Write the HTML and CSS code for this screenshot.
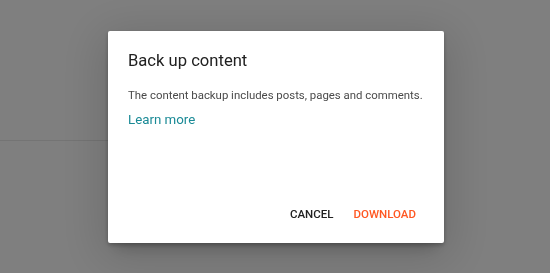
FILE: index.html
```html
<!DOCTYPE html>
<html lang="en">
<head>
    <meta charset="UTF-8">
    <meta name="viewport" content="width=device-width, initial-scale=1.0">
    <title>Back up content</title>
    <link rel="stylesheet" href="styles.css">
</head>
<body>
    <div class="page">
        <div class="page-divider"></div>
    </div>

    <div class="overlay">
        <div class="dialog">
            <h2 class="dialog-title">Back up content</h2>
            <div class="dialog-content">
                <p class="dialog-text">The content backup includes posts, pages and comments.</p>
                <a class="learn-more" href="#">Learn more</a>
            </div>
            <div class="dialog-actions">
                <button class="btn btn-cancel">Cancel</button>
                <button class="btn btn-download">Download</button>
            </div>
        </div>
    </div>
</body>
</html>
```

FILE: styles.css
```css
* {
    box-sizing: border-box;
    margin: 0;
    padding: 0;
    font-family: Roboto, 'Noto Sans', Arial, sans-serif;
}

body {
    min-height: 100vh;
    background-color: #fff;
}

.page {
    padding-top: 140px;
}

.page-divider {
    width: 45%;
    border-top: 1px solid #e8e8e8;
}

.overlay {
    position: fixed;
    top: 0;
    left: 0;
    right: 0;
    bottom: 0;
    display: flex;
    justify-content: center;
    align-items: center;
    padding-left: 2px;
    background-color: rgba(0, 0, 0, 0.5);
}

.dialog {
    display: flex;
    flex-direction: column;
    width: 336px;
    height: 212px;
    background-color: #fff;
    border-radius: 2px;
    box-shadow: 0 9px 46px 8px rgba(0, 0, 0, 0.14),
                0 11px 15px -7px rgba(0, 0, 0, 0.2),
                0 2px 4px rgba(0, 0, 0, 0.25);
    padding: 18px 20px 0;
}

.dialog-title {
    font-size: 16.6px;
    font-weight: 400;
    line-height: 24px;
    color: #212121;
}

.dialog-content {
    margin-top: 14px;
    flex: 1;
}

.dialog-text {
    font-size: 11.4px;
    line-height: 16px;
    color: #4a4a4a;
}

.learn-more {
    display: inline-block;
    margin-top: 7px;
    font-size: 13.3px;
    line-height: 20px;
    color: #1a8a96;
    text-decoration: none;
}

.dialog-actions {
    display: flex;
    justify-content: flex-end;
    gap: 4px;
    padding: 0 0 15px 0;
}

.btn {
    border: none;
    background: none;
    padding: 0 8px;
    height: 28px;
    font-size: 11.5px;
    font-weight: 500;
    text-transform: uppercase;
    cursor: pointer;
}

.btn-cancel {
    color: #212121;
}

.btn-download {
    color: #ff5722;
}
```
